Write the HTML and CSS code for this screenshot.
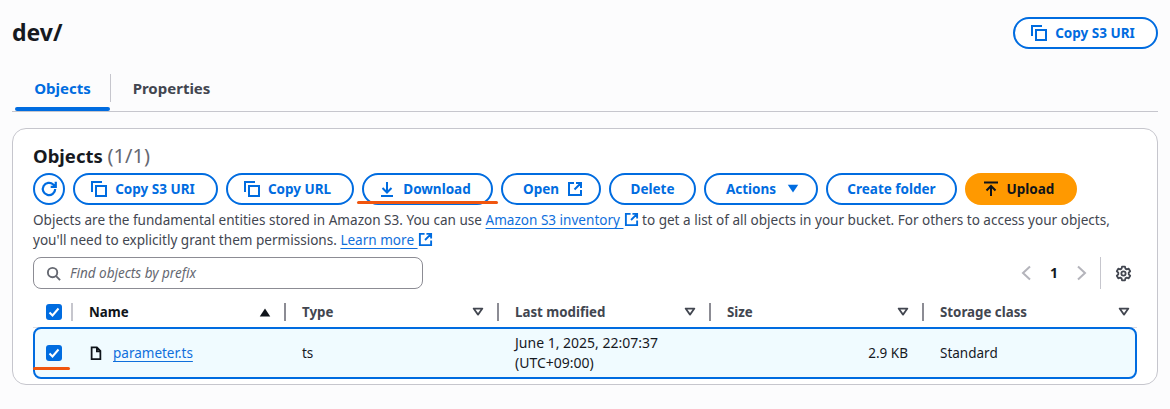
FILE: index.html
```html
<!DOCTYPE html>
<html lang="en">
<head>
  <meta charset="UTF-8" />
  <title>dev/ - S3 bucket</title>
  <link rel="stylesheet" href="styles.css">
</head>
<body>
  <svg class="sprite" width="0" height="0">
    <symbol id="copy" viewBox="0 0 16 16"><path d="M1 11V1h10M5 5h10v10H5z" fill="none" stroke="currentColor" stroke-width="2"/></symbol>
    <symbol id="ext" viewBox="0 0 16 16"><path d="M7 2H2v12h12V9M9 2h5v5M14 2 7.500 8.500" fill="none" stroke="currentColor" stroke-width="2"/></symbol>
    <symbol id="filter" viewBox="0 0 16 16"><path d="M3 4h10l-5 7z" fill="none" stroke="currentColor" stroke-width="2" stroke-linejoin="round"/></symbol>
  </svg>

  <div class="page-head">
    <h1>dev/</h1>
    <button class="btn btn-lead"><svg class="icon"><use href="#copy"/></svg>Copy S3 URI</button>
  </div>

  <div class="tabs">
    <div class="tab active">Objects</div>
    <div class="tab">Properties</div>
  </div>

  <section class="panel">
    <h2>Objects <span class="count">(1/1)</span></h2>

    <div class="toolbar">
      <button class="btn btn-round" aria-label="Refresh">
        <svg class="icon" viewBox="0 0 16 16"><path d="M13.500 8a5.500 5.500 0 1 1-1.700-4L14 6M14 1.500V6H9.500" fill="none" stroke="currentColor" stroke-width="2"/></svg>
      </button>
      <button class="btn btn-lead w-copy-s3"><svg class="icon"><use href="#copy"/></svg>Copy S3 URI</button>
      <button class="btn btn-lead w-copy-url"><svg class="icon"><use href="#copy"/></svg>Copy URL</button>
      <button class="btn btn-lead w-download">
        <svg class="icon" viewBox="0 0 16 16"><path d="M8 1v10M3.500 7 8 11.500 12.500 7M2 15h12" fill="none" stroke="currentColor" stroke-width="2"/></svg>Download
      </button>
      <button class="btn btn-trail w-open">Open<svg class="icon"><use href="#ext"/></svg></button>
      <button class="btn w-delete">Delete</button>
      <button class="btn btn-trail w-actions">Actions<svg class="icon caret" viewBox="0 0 16 16"><path d="M2 3h12L8 12z" fill="currentColor"/></svg></button>
      <button class="btn w-folder">Create folder</button>
      <button class="btn btn-lead btn-primary">
        <svg class="icon" viewBox="0 0 16 16"><path d="M1 1.500h14M8 15V5M3.500 9.500 8 5l4.500 4.500" fill="none" stroke="currentColor" stroke-width="2"/></svg>Upload
      </button>
    </div>

    <p class="desc">Objects are the fundamental entities stored in Amazon S3. You can use <a href="#">Amazon S3 inventory&nbsp;</a><svg class="icon link-icon"><use href="#ext"/></svg> to get a list of all objects in your bucket. For others to access your objects, you'll need to explicitly grant them permissions. <a href="#">Learn more&nbsp;</a><svg class="icon link-icon"><use href="#ext"/></svg></p>

    <div class="filter-row">
      <div class="search">
        <svg class="search-icon" viewBox="0 0 16 16"><circle cx="7" cy="7" r="5" fill="none" stroke="currentColor" stroke-width="2"/><path d="m10.500 10.500 4.500 4.500" stroke="currentColor" stroke-width="2"/></svg>
        <span>Find objects by prefix</span>
      </div>
      <div class="pager">
        <svg class="chev" viewBox="0 0 16 16"><path d="M12 1.500 5 8l7 6.500" fill="none" stroke="currentColor" stroke-width="2"/></svg>
        <b>1</b>
        <svg class="chev" viewBox="0 0 16 16"><path d="m4 1.500 7 6.500-7 6.500" fill="none" stroke="currentColor" stroke-width="2"/></svg>
        <i class="pager-sep"></i>
        <svg class="gear" viewBox="0 0 16 16"><path d="M6.600 1.500h2.800l.4 1.900 1.300.7 1.800-.6 1.400 2.400-1.400 1.300v1.600l1.400 1.300-1.400 2.400-1.800-.6-1.300.7-.4 1.900H6.600l-.4-1.900-1.300-.7-1.800.6-1.400-2.400 1.400-1.300V7.200L1.700 5.900l1.400-2.400 1.800.6 1.300-.7z" fill="none" stroke="currentColor" stroke-width="1.700" stroke-linejoin="round"/><circle cx="8" cy="8" r="2" fill="none" stroke="currentColor" stroke-width="1.700"/></svg>
      </div>
    </div>

    <div class="table-head">
      <div class="th th-check"><span class="check"><svg viewBox="0 0 16 16"><path d="m3.500 8.500 3 3 6-7" fill="none" stroke="#fff" stroke-width="2"/></svg></span></div>
      <div class="th th-name">Name<svg class="sort" viewBox="0 0 16 16"><path d="M2 13 8 4l6 9z" fill="currentColor"/></svg></div>
      <div class="th">Type<svg class="sort"><use href="#filter"/></svg></div>
      <div class="th">Last modified<svg class="sort"><use href="#filter"/></svg></div>
      <div class="th">Size<svg class="sort"><use href="#filter"/></svg></div>
      <div class="th th-last">Storage class<svg class="sort"><use href="#filter"/></svg></div>
    </div>

    <div class="table-row">
      <div class="td td-check"><span class="check"><svg viewBox="0 0 16 16"><path d="m3.500 8.500 3 3 6-7" fill="none" stroke="#fff" stroke-width="2"/></svg></span></div>
      <div class="td td-name">
        <svg class="file" viewBox="0 0 16 16"><path d="M3 1.500h6l4 4V15H3zM9 1.500V6h4" fill="none" stroke="currentColor" stroke-width="2"/></svg>
        <a href="#">parameter.ts</a>
      </div>
      <div class="td">ts</div>
      <div class="td td-date">June 1, 2025, 22:07:37<br>(UTC+09:00)</div>
      <div class="td td-size">2.9 KB</div>
      <div class="td td-class">Standard</div>
    </div>
  </section>

  <!-- red pen marks from the annotated screenshot -->
  <i class="mark mark-download"></i>
  <i class="mark mark-check"></i>
</body>
</html>
```

FILE: styles.css
```css
* {
  box-sizing: border-box;
}
html, body {
  margin: 0;
  height: 409px;
  overflow: hidden;
}
body {
  position: relative;
  padding: 17px 12px 0;
  background: #fcfcfd;
  color: #16191f;
  font-family: "Noto Sans", Arial, sans-serif;
  font-size: 14px;
  line-height: 20px;
}
.sprite {
  position: absolute;
}
a {
  color: #0f6fdc;
  text-decoration: underline;
  text-underline-offset: 3px;
}
.page-head {
  display: flex;
  justify-content: space-between;
  align-items: flex-start;
  height: 31px;
}
h1 {
  margin: 0;
  font-size: 23px;
  line-height: 31px;
  font-weight: 700;
}
.btn {
  display: inline-flex;
  align-items: center;
  justify-content: center;
  gap: 8px;
  height: 32px;
  padding: 0;
  border: 2px solid #006ce0;
  border-radius: 16px;
  background: #fff;
  color: #006ce0;
  font-family: inherit;
  font-size: 13.500px;
  font-weight: 700;
  white-space: nowrap;
}
.btn-lead {
  padding-right: 5px;
}
.btn-trail {
  padding-left: 4px;
}
.icon {
  width: 16px;
  height: 16px;
  flex: none;
}
.btn-round {
  width: 32px;
}
.btn-round .icon {
  width: 18px;
  height: 18px;
}
.btn-primary {
  width: 112px;
  background: #ff9900;
  border-color: #ff9900;
  color: #0f141a;
}
.w-copy-s3 { width: 145px; }
.w-copy-url { width: 128px; }
.w-download { width: 131px; }
.w-open { width: 100px; }
.w-delete { width: 87px; }
.w-actions { width: 114px; gap: 10px; }
.w-folder { width: 131px; }
.page-head .btn { width: 145px; }
.caret {
  width: 14px;
  height: 14px;
}
.tabs {
  display: flex;
  height: 49px;
  margin-top: 15px;
  border-bottom: 1px solid #c6c6cd;
}
.tab {
  position: relative;
  height: 28px;
  margin-top: 11px;
  border-left: 1px solid transparent;
  font-size: 15px;
  font-weight: 700;
  line-height: 28px;
  color: #424650;
  text-align: center;
}
.tab + .tab {
  width: 122px;
  border-left-color: #c6c6cd;
}
.tab.active {
  color: #006ce0;
  margin-left: 2px;
  width: 96px;
}
.tab.active::after {
  content: "";
  position: absolute;
  left: 0;
  right: 0;
  top: 33px;
  height: 4px;
  border-radius: 2px;
  background: #006ce0;
}
.panel {
  height: 257px;
  margin-top: 16px;
  padding: 15px 20px 0;
  border: 1px solid #c6c6cd;
  border-radius: 14px;
  background: #fff;
}
h2 {
  margin: 0;
  font-size: 18.500px;
  line-height: 24px;
  font-weight: 700;
}
.count {
  font-size: 20px;
  font-weight: 400;
  color: #656871;
}
.toolbar {
  display: flex;
  gap: 8px;
  margin-top: 5px;
}
.desc {
  width: 1104px;
  margin: 5px 0 0;
  font-size: 13.550px;
  line-height: 20px;
  color: #424650;
}
.link-icon {
  width: 15px;
  height: 15px;
  color: #006ce0;
  vertical-align: -2px;
}
.filter-row {
  display: flex;
  justify-content: space-between;
  align-items: center;
  height: 32px;
  margin-top: 7px;
}
.search {
  display: flex;
  align-items: center;
  gap: 9px;
  width: 390px;
  height: 32px;
  padding: 0 12px;
  border: 1px solid #8c8c94;
  border-radius: 8px;
  color: #656871;
  font-style: italic;
  font-size: 13.500px;
}
.search-icon {
  width: 15px;
  height: 15px;
  flex: none;
}
.pager {
  display: flex;
  align-items: center;
  width: 119px;
  color: #16191f;
}
.pager b {
  width: 40px;
  text-align: center;
  font-size: 14px;
}
.chev {
  width: 16px;
  height: 16px;
  color: #b4b4bb;
}
.pager-sep {
  width: 1px;
  height: 32px;
  margin: 0 14px 0 10px;
  background: #c6c6cd;
}
.gear {
  width: 17px;
  height: 17px;
  color: #424650;
}
.table-head,
.table-row {
  display: grid;
  grid-template-columns: 40px 213px 213px 212px 213px 213px;
  width: 1104px;
}
.table-head {
  height: 31px;
  margin-top: 8px;
  align-items: center;
  border-bottom: 1px solid #dedee3;
  font-weight: 700;
  font-size: 13.300px;
  color: #424650;
}
.th {
  display: flex;
  align-items: center;
  justify-content: space-between;
  height: 18px;
  padding: 0 12px 0 16px;
  border-right: 2px solid #8c8c94;
}
.th-check {
  padding: 0 0 0 13px;
  border-right-color: #c6c6cd;
}
.th-name {
  color: #0f141a;
}
.th-last {
  border-right: 0;
  padding-right: 6px;
}
.sort {
  width: 14px;
  height: 14px;
  color: #424650;
}
.th-name .sort {
  color: #0f141a;
}
.check {
  display: block;
  width: 16px;
  height: 16px;
  border-radius: 3px;
  background: #006ce0;
}
.check svg {
  display: block;
  width: 16px;
  height: 16px;
}
.table-row {
  height: 52px;
  border: 2px solid #006ce0;
  border-radius: 8px;
  background: #f0fbff;
  margin-top: -1px;
  align-items: center;
  font-size: 13.500px;
  grid-template-columns: 38px 213px 213px 212px 213px 211px;
}
.td {
  padding-left: 16px;
}
.td-check {
  padding-left: 11px;
}
.td-name {
  display: flex;
  align-items: center;
  gap: 10px;
}
.file {
  width: 14px;
  height: 16px;
  flex: none;
  color: #0f141a;
}
.td-date {
  font-size: 14px;
}
.td-size {
  padding-left: 0;
  padding-right: 16px;
  text-align: right;
}
.mark {
  position: absolute;
  height: 3px;
  border-radius: 2px;
  background: #f0560f;
}
.mark-download {
  left: 357px;
  top: 201px;
  width: 141px;
}
.mark-check {
  left: 33px;
  top: 367px;
  width: 37px;
}
```
